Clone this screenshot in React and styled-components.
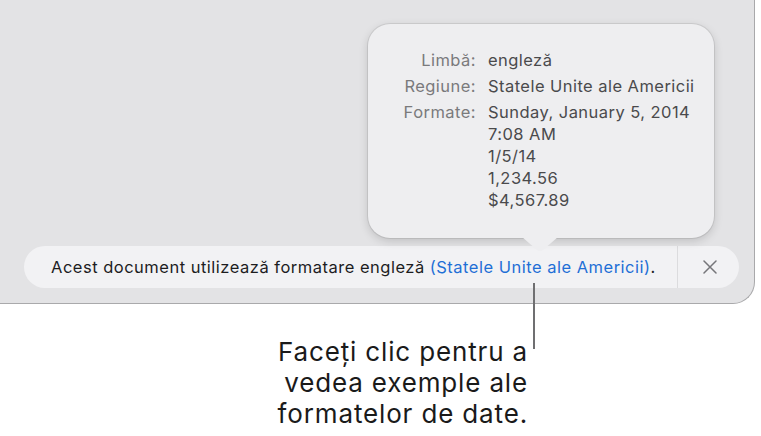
import styled, { createGlobalStyle } from 'styled-components';

const Global = createGlobalStyle`
    html, body {
        margin: 0;
        padding: 0;
        background: #ffffff;
    }
    body {
        font-family: Inter, "Liberation Sans", sans-serif;
        -webkit-font-smoothing: antialiased;
    }
`

const Page = styled.div`
    position: relative;
    width: 761px;
    height: 436px;
    overflow: hidden;
`

const Window = styled.div`
    position: relative;
    width: 755px;
    height: 304px;
    box-sizing: border-box;
    background-color: #e3e3e5;
    border-right: 1px solid #a9a9ab;
    border-bottom: 1px solid #a9a9ab;
    border-bottom-right-radius: 22px;
    display: flex;
    flex-direction: column;
    justify-content: flex-end;
    padding: 0 15px 15px 24px;
`

const Banner = styled.div`
    position: relative;
    height: 42px;
    display: flex;
    align-items: stretch;
    background-color: #f2f2f4;
    border-radius: 21px;
`

const Message = styled.p`
    flex: 1;
    margin: 0;
    display: flex;
    align-items: center;
    padding-left: 27px;
    font-size: 16.5px;
    letter-spacing: 0.5px;
    color: #1d1d1f;
    white-space: nowrap;
`

const Link = styled.span`
    color: #1f6fd6;
    margin-left: 5px;
`

const Close = styled.button`
    width: 62px;
    border: none;
    border-left: 1px solid #dcdcde;
    background: transparent;
    display: flex;
    align-items: center;
    justify-content: center;
    padding: 0 0 0 2px;
`

const Popover = styled.div`
    position: absolute;
    left: 368px;
    top: 24px;
    width: 346px;
    height: 214px;
    box-sizing: border-box;
    background-color: #eeeef0;
    border-radius: 22px;
    box-shadow: 0 0 0 1px rgba(0, 0, 0, 0.08), 0 3px 10px rgba(0, 0, 0, 0.16);
    padding: 25px 0 0 24px;
    display: grid;
    grid-template-columns: 84px auto;
    column-gap: 12px;
    row-gap: 4px;
    align-content: start;
    font-size: 16.5px;
    letter-spacing: 0.45px;
    line-height: 22px;
`

const Label = styled.div`
    text-align: right;
    color: #7a7a7c;
`

const Value = styled.div`
    color: #4a4a4c;
`

const Arrow = styled.svg`
    position: absolute;
    left: 154px;
    bottom: -14px;
`

const Leader = styled.div`
    position: absolute;
    left: 533px;
    top: 283px;
    width: 2px;
    height: 66px;
    background-color: #6f6f71;
`

const Caption = styled.p`
    margin: 32px 0 0 0;
    width: 528px;
    text-align: right;
    font-size: 26px;
    letter-spacing: 0.85px;
    line-height: 31px;
    color: #1a1a1a;
`

const rows = [
    ['Limbă:', ['engleză']],
    ['Regiune:', ['Statele Unite ale Americii']],
    ['Formate:', ['Sunday, January 5, 2014', '7:08 AM', '1/5/14', '1,234.56', '$4,567.89']],
]

const App = () => {
    return (
        <Page>
            <Global />
            <Window>
                <Banner>
                    <Message>
                        Acest document utilizează formatare engleză
                        <Link>(Statele Unite ale Americii)</Link>.
                    </Message>
                    <Close aria-label="Închide">
                        <svg width="14" height="14" viewBox="0 0 14 14">
                            <path d="M1 1 L13 13 M13 1 L1 13" stroke="#76767a" strokeWidth="1.5" strokeLinecap="round" />
                        </svg>
                    </Close>
                </Banner>
            </Window>
            <Popover>
                {rows.map(([label, values]) => (
                    <>
                        <Label key={label}>{label}</Label>
                        <Value>
                            {values.map(v => <div key={v}>{v}</div>)}
                        </Value>
                    </>
                ))}
                <Arrow width="36" height="15" viewBox="0 0 36 15">
                    <path d="M0 0 L14.5 12.5 Q18 15.5 21.5 12.5 L36 0 Z" fill="#eeeef0" />
                </Arrow>
            </Popover>
            <Leader />
            <Caption>
                Faceți clic pentru a<br />
                vedea exemple ale<br />
                formatelor de date.
            </Caption>
        </Page>
    )
}

export default App;
